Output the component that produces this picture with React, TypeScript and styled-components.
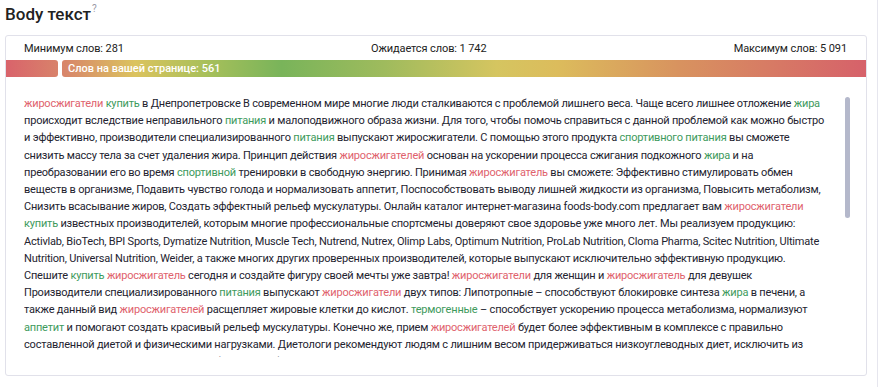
import styled, { createGlobalStyle } from 'styled-components'

const GlobalStyle = createGlobalStyle`
  html, body {
    margin: 0;
    padding: 0;
    background: #fff;
  }
  body {
    font-family: Roboto, 'Noto Sans', 'Liberation Sans', sans-serif;
    color: #222;
  }
`

type Kind = 'r' | 'g'
type Part = [string, Kind | null]

// visible lines, kept as in the original layout; [r:..] red keyword, [g:..] green keyword
const lines = [
  '[r:жиросжигатели] [g:купить] в Днепропетровске В современном мире многие люди сталкиваются с проблемой лишнего веса. Чаще всего лишнее отложение [g:жира]',
  'происходит вследствие неправильного [g:питания] и малоподвижного образа жизни. Для того, чтобы помочь справиться с данной проблемой как можно быстро',
  'и эффективно, производители специализированного [g:питания] выпускают жиросжигатели. С помощью этого продукта [g:спортивного питания] вы сможете',
  'снизить массу тела за счет удаления жира. Принцип действия [r:жиросжигателей] основан на ускорении процесса сжигания подкожного [g:жира] и на',
  'преобразовании его во время [g:спортивной] тренировки в свободную энергию. Принимая [r:жиросжигатель] вы сможете: Эффективно стимулировать обмен',
  'веществ в организме, Подавить чувство голода и нормализовать аппетит, Поспособствовать выводу лишней жидкости из организма, Повысить метаболизм,',
  'Снизить всасывание жиров, Создать эффектный рельеф мускулатуры. Онлайн каталог интернет-магазина foods-body.com предлагает вам [r:жиросжигатели]',
  '[g:купить] известных производителей, которым многие профессиональные спортсмены доверяют свое здоровье уже много лет. Мы реализуем продукцию:',
  'Activlab, BioTech, BPI Sports, Dymatize Nutrition, Muscle Tech, Nutrend, Nutrex, Olimp Labs, Optimum Nutrition, ProLab Nutrition, Cloma Pharma, Scitec Nutrition, Ultimate',
  'Nutrition, Universal Nutrition, Weider, а также многих других проверенных производителей, которые выпускают исключительно эффективную продукцию.',
  'Спешите [g:купить] [r:жиросжигатель] сегодня и создайте фигуру своей мечты уже завтра! [r:жиросжигатели] для женщин и [r:жиросжигатель] для девушек',
  'Производители специализированного [g:питания] выпускают [r:жиросжигатели] двух типов: Липотропные – способствуют блокировке синтеза [g:жира] в печени, а',
  'также данный вид [r:жиросжигателей] расщепляет жировые клетки до кислот. [g:термогенные] – способствует ускорению процесса метаболизма, нормализуют',
  '[g:аппетит] и помогают создать красивый рельеф мускулатуры. Конечно же, прием [r:жиросжигателей] будет более эффективным в комплексе с правильно',
  'составленной диетой и физическими нагрузками. Диетологи рекомендуют людям с лишним весом придерживаться низкоуглеводных диет, исключить из'
]

// the rest of the article, below the fold
const rest = `своего рациона сладкий и мучной хлеб, жареные блюда, копчёности, газированные напитки и алкоголь. Основу питания должны составлять нежирное мясо, рыба, овощи, крупы и кисломолочные продукты. Не менее важен и режим: питаться следует небольшими порциями пять-шесть раз в день, а последний приём пищи должен быть не позднее чем за три часа до сна. Выпивайте в течение дня достаточное количество чистой воды, ведь она ускоряет обменные процессы и помогает организму избавляться от продуктов распада жировых клеток. Принимать [r:жиросжигатели] рекомендуется курсами, строго соблюдая дозировку, указанную производителем на упаковке. Перед началом приёма желательно проконсультироваться с врачом или опытным тренером, особенно если у вас есть хронические заболевания сердечно-сосудистой системы. Оптимальное время для приёма большинства термогенных добавок – утро и период за 30–40 минут до тренировки. Сочетайте добавки с кардионагрузками: бег, плавание, велотренажёр и интервальные тренировки позволят быстрее добиться желаемого результата. Силовые упражнения помогут сохранить мышечную массу во время сушки и сделают рельеф более выразительным. В нашем интернет-магазине вы найдёте [r:жиросжигатели] для мужчин и женщин, L-карнитин, комплексы для сушки, а также другие товары [g:спортивного питания] по доступным ценам. Мы осуществляем доставку по Днепропетровску и всей Украине, а наши консультанты всегда помогут подобрать продукт, который подойдёт именно вам. Оформить заказ можно круглосуточно на сайте или по телефону. Постоянным покупателям действуют скидки и специальные предложения, следите за акциями и новинками каталога. Выбирайте качественные [r:жиросжигатели] от проверенных брендов и достигайте своих целей вместе с нами! Регулярные тренировки, правильное [g:питание] и грамотно подобранные добавки – вот три составляющие красивой и здоровой фигуры, о которой вы давно мечтали.`

const parse = (s: string): Part[] =>
  s.split(/(\[[rg]:[^\]]+\])/).filter(Boolean).map((chunk) => {
    const m = chunk.match(/^\[([rg]):([^\]]+)\]$/)
    return m ? [m[2], m[1] as Kind] : [chunk, null]
  })

const Marked = ({ text }: { text: string }) => (
  <>
    {parse(text).map(([t, k], i) =>
      k ? (
        <S.Word key={i} kind={k}>
          {t}
        </S.Word>
      ) : (
        <span key={i}>{t}</span>
      )
    )}
  </>
)

const BAR_GRADIENT = `linear-gradient(90deg,
  #d9636b 0%,
  #d8876a 7%,
  #dbc35e 15%,
  #a9c05a 23%,
  #79b45a 32%,
  #9fbb5d 44%,
  #d5c560 57%,
  #dcbc5c 64%,
  #d8935f 78%,
  #d6616a 100%)`

export default function App() {
  return (
    <S.Page>
      <GlobalStyle />
      <S.Title>
        Body текст<S.Hint>?</S.Hint>
      </S.Title>
      <S.Card>
        <S.Stats>
          <span>Минимум слов: 281</span>
          <span>Ожидается слов: 1 742</span>
          <span>Максимум слов: 5 091</span>
        </S.Stats>
        <S.Bar>
          <S.Segment offset={0} style={{ width: 52 }} />
          <S.Segment offset={56} grow>
            Слов на вашей странице: 561
          </S.Segment>
        </S.Bar>
        <S.Body>
          <S.Viewport>
            <S.Text>
              {lines.map((l, i) => (
                <S.Line key={i}>
                  <Marked text={l} />
                </S.Line>
              ))}
              <Marked text={rest} />
            </S.Text>
          </S.Viewport>
          <S.Track>
            <S.Thumb />
          </S.Track>
        </S.Body>
      </S.Card>
    </S.Page>
  )
}

const S = {
  Page: styled.div`
    width: 878px;
    height: 387px;
    box-sizing: border-box;
    padding: 0 10px 0 5px;
    border-right: 1px solid #e6e6ee;
    overflow: hidden;
  `,
  Title: styled.h2`
    margin: 2px 0 9px;
    font-size: 17px;
    line-height: 24px;
    font-weight: 500;
    color: #222;
  `,
  Hint: styled.sup`
    font-size: 10px;
    font-weight: 400;
    color: #9a9aa6;
    margin-left: 1px;
    vertical-align: 8px;
    line-height: 0;
  `,
  Card: styled.div`
    border: 1px solid #e1e1ea;
    border-radius: 3px;
    padding: 6px 0 18px;
  `,
  Stats: styled.div`
    display: flex;
    justify-content: space-between;
    padding: 0 19px 0 18px;
    font-size: 11px;
    line-height: 14px;
    letter-spacing: -0.1px;
    color: #222;
  `,
  Bar: styled.div`
    display: flex;
    gap: 4px;
    height: 17px;
    margin-top: 4px;
  `,
  Segment: styled.div<{ offset: number; grow?: boolean }>`
    flex: ${(p) => (p.grow ? '1' : 'none')};
    background: ${BAR_GRADIENT};
    background-size: 861px 100%;
    background-position: ${(p) => -p.offset}px 0;
    border-radius: ${(p) => (p.grow ? '3px 0 0 3px' : '0 3px 3px 0')};
    color: #fff;
    font-size: 11px;
    font-weight: 500;
    line-height: 17px;
    padding-left: ${(p) => (p.grow ? '6px' : '0')};
    white-space: nowrap;
  `,
  Body: styled.div`
    display: flex;
    gap: 5px;
    height: 262px;
    margin: 18px 16px 0 18px;
  `,
  Viewport: styled.div`
    flex: 1;
    min-width: 0;
    overflow: hidden;
  `,
  Track: styled.div`
    width: 5px;
    flex: none;
    padding-top: 2px;
  `,
  Thumb: styled.div`
    height: 121px;
    border-radius: 3px;
    background: #b4b8cb;
  `,
  Text: styled.div`
    font-size: 11px;
    line-height: 17.2px;
    letter-spacing: -0.2px;
    color: #23232f;
  `,
  Line: styled.div`
    white-space: nowrap;
  `,
  Word: styled.span<{ kind: Kind }>`
    color: ${(p) => (p.kind === 'r' ? '#e0626d' : '#3d9a5c')};
  `
}
